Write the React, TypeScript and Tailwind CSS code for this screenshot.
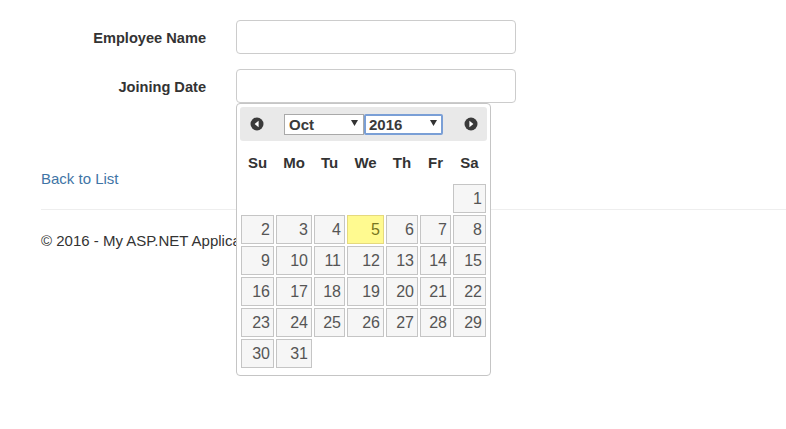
import React from 'react';

const days = ['Su', 'Mo', 'Tu', 'We', 'Th', 'Fr', 'Sa'];
const dates = Array.from({ length: 31 }, (_, i) => i + 1);

function Arrow({ dir }: { dir: 'left' | 'right' }) {
  return (
    <svg width="14" height="14" viewBox="0 0 14 14">
      <circle cx="7" cy="7" r="6.5" fill="#3a3a3a" />
      <path d={dir === 'left' ? 'M8.6 3.8 L4.6 7 L8.6 10.2 Z' : 'M5.4 3.8 L9.4 7 L5.4 10.2 Z'} fill="#fff" />
    </svg>
  );
}

function Select({ value, focused }: { value: string; focused?: boolean }) {
  return (
    <div className="relative">
      <select
        defaultValue={value}
        className={`block h-[21px] appearance-none bg-white text-[15px] leading-[17px] font-bold text-[#3a3a3a] outline-none ${
          focused ? 'w-[79px] border-2 border-[#7a9fd6] rounded-[2px] pl-[3px] pb-[2px]' : 'w-[80px] border border-[#a9a9a9] pl-[4px]'
        }`}
      >
        <option>{value}</option>
      </select>
      <svg className="absolute right-[6px] top-[6px]" width="7" height="6" viewBox="0 0 7 6">
        <path d="M0 0 H7 L3.5 6 Z" fill="#333" />
      </svg>
    </div>
  );
}

function Datepicker() {
  return (
    <div className="absolute left-0 top-[34px] z-10 h-[273px] w-[255px] rounded-[4px] border border-[#c5c5c5] bg-white px-[3px] pt-[3px]">
      <div className="flex h-[34px] w-[247px] items-center rounded-[3px] bg-[#e9e9e9] pl-[10px] pr-[9px]">
        <Arrow dir="left" />
        <div className="ml-[20px] flex">
          <Select value="Oct" />
          <Select value="2016" focused />
        </div>
        <div className="ml-auto flex">
          <Arrow dir="right" />
        </div>
      </div>
      <div className="ml-[1px] grid grid-cols-[33px_36px_31px_37px_32px_31px_33px] gap-[2px] pt-[10px] pb-[10px] text-center text-[15px] leading-[23px] font-bold text-[#333]">
        {days.map((d) => (
          <div key={d}>{d}</div>
        ))}
      </div>
      <div className="ml-[1px] grid grid-cols-[33px_36px_31px_37px_32px_31px_33px] auto-rows-[29px] gap-[2px] text-[16px]">
        {dates.map((n) => (
          <div
            key={n}
            className={`flex items-end justify-end border pr-[3px] pb-[2px] leading-[22px] ${
              n === 5 ? 'border-[#e5d97e] bg-[#fffa90] text-[#777620]' : 'border-[#c5c5c5] bg-[#f6f6f6] text-[#555]'
            } ${n === 1 ? 'col-start-7' : ''}`}
          >
            {n}
          </div>
        ))}
      </div>
    </div>
  );
}

export default function App() {
  return (
    <div className="h-[429px] w-[786px] overflow-hidden bg-white font-['Liberation_Sans',Arial,sans-serif] text-[15px] text-[#333]">
      <div className="pt-[20px] pl-[41px]">
        <div className="flex h-[34px] items-center">
          <label className="w-[165px] pt-[3px] text-right text-[14.6px] font-bold">Employee Name</label>
          <input className="ml-[30px] h-[34px] w-[280px] rounded-[4px] border border-[#ccc] bg-white" />
        </div>
        <div className="mt-[15px] flex h-[34px] items-center">
          <label className="w-[165px] pt-[3px] text-right text-[14.6px] font-bold">Joining Date</label>
          <div className="relative ml-[30px]">
            <input className="block h-[34px] w-[280px] rounded-[4px] border border-[#ccc] bg-white" />
            <Datepicker />
          </div>
        </div>
        <div className="mt-[66px] leading-[20px]">
          <a className="text-[#3f75a6]" href="#">Back to List</a>
        </div>
      </div>
      <div className="ml-[41px] mt-[20px] border-t border-[#eee] pt-[21px] leading-[20px]">
        © 2016 - My ASP.NET Application
      </div>
    </div>
  );
}
